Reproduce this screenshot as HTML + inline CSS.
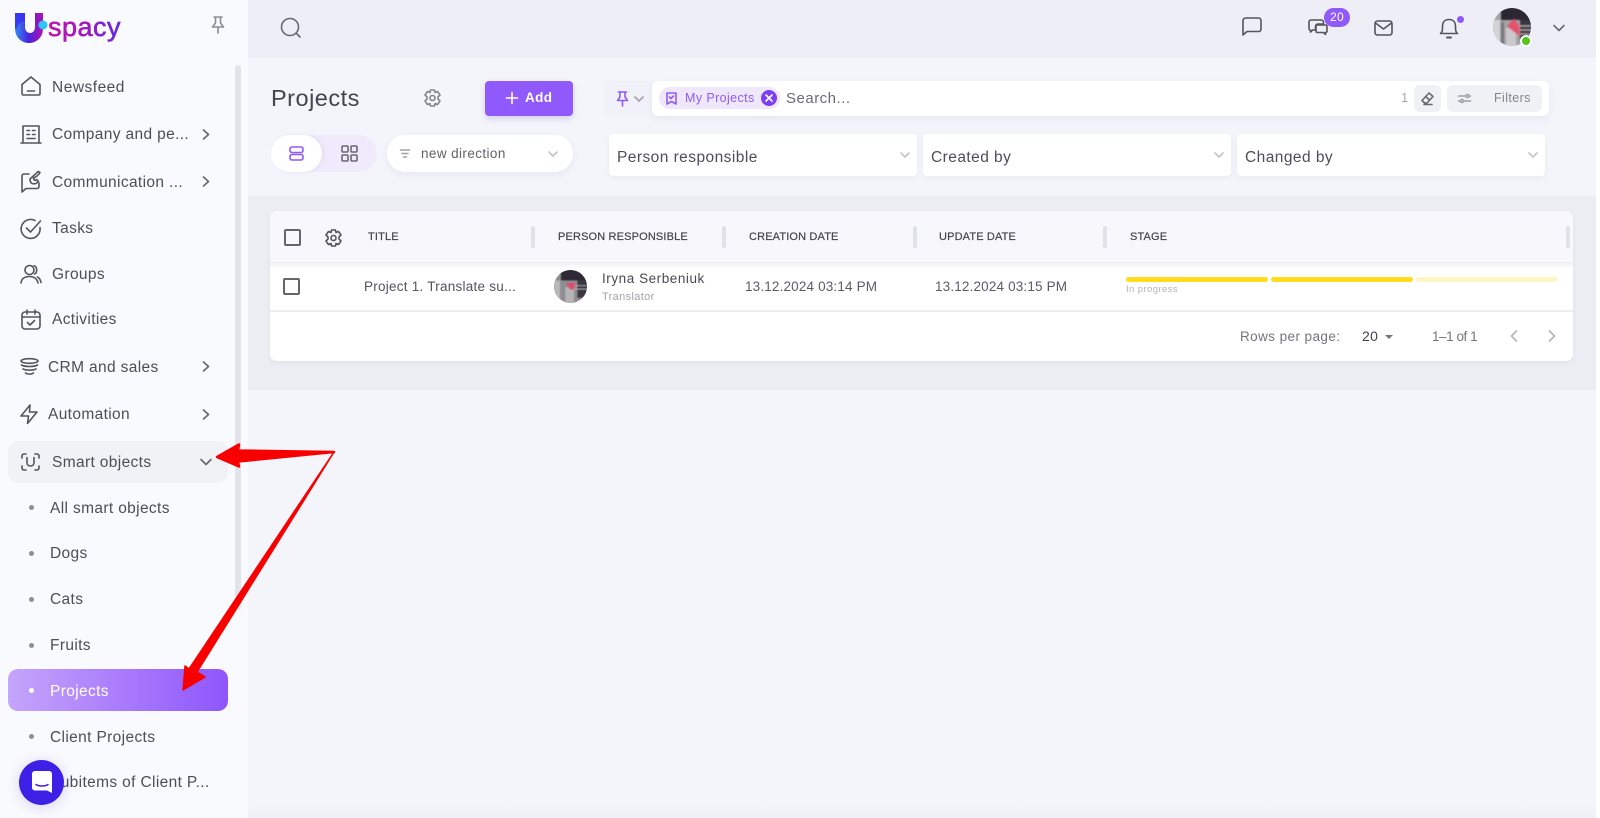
<!DOCTYPE html>
<html lang="en"><head><meta charset="utf-8"><title>Projects</title>
<style>
*{box-sizing:border-box}
html,body{margin:0;padding:0;width:1600px;height:818px;overflow:hidden;background:#f4f5fb;font-family:"Liberation Sans",sans-serif;color:#44424c}
.a{position:absolute}
.t{position:absolute;white-space:nowrap;line-height:20px;height:20px}
.n{font-size:15.5px;letter-spacing:.36px;color:#4f4d57;margin-top:1px}
.d{position:absolute;left:29px;width:5px;height:5px;border-radius:50%;background:#8f8e96}
svg{position:absolute;overflow:visible;fill:none;stroke:#55535c;stroke-width:1.6;stroke-linecap:round;stroke-linejoin:round}
.sep{position:absolute;top:226px;width:4px;height:22px;border-radius:2px;background:#e0e1e9}
.h{font-size:11px;letter-spacing:.15px;color:#45434d;top:227px;-webkit-text-stroke:.2px #45434d}
.dd{position:absolute;top:134px;height:42px;background:#fff;border-radius:4px;box-shadow:0 2px 6px rgba(90,90,130,.07)}
.dd span{position:absolute;left:8px;top:14px;font-size:15.5px;line-height:20px;letter-spacing:.45px;color:#4f4d57}
</style></head><body>

<!-- main backgrounds -->
<div class="a" style="left:248px;top:0;width:1348px;height:58px;background:#eeeff6"></div>
<div class="a" style="left:248px;top:58px;width:1348px;height:138px;background:#f4f5fb"></div>
<div class="a" style="left:248px;top:196px;width:1348px;height:194px;background:#ecedf3"></div>
<div class="a" style="left:1596px;top:0;width:4px;height:818px;background:#fff"></div>
<div class="a" style="left:248px;top:805px;width:1348px;height:13px;background:linear-gradient(#f4f5fb,#eff0f5)"></div>

<!-- sidebar -->
<div class="a" style="left:0;top:0;width:248px;height:818px;background:#f9fafd"></div>
<div class="a" style="left:235px;top:65px;width:6px;height:545px;border-radius:3px;background:#e1e2ea"></div>
<div class="a" style="left:8px;top:441px;width:220px;height:42px;border-radius:11px;background:#f1f2f6"></div>
<div class="a" style="left:8px;top:669px;width:220px;height:42px;border-radius:10px;background:linear-gradient(90deg,#c5a5fb,#8f55fc)"></div>

<!-- logo -->
<svg style="left:15px;top:12px" width="40" height="32" viewBox="0 0 40 32">
<defs><linearGradient id="lg" x1="0" y1="0" x2="1" y2="0"><stop offset="0" stop-color="#2f8cf5"/><stop offset=".5" stop-color="#4a22dc"/><stop offset="1" stop-color="#b312b0"/></linearGradient></defs>
<path d="M0 1H10V15C10 23 20 23 20 15V1H28V16C28 36 0 36 0 16Z" fill="url(#lg)" stroke="none"/>
<path d="M0 1H10V9C6 9 3 12 1 18L0 16Z" fill="#3a2cf0" stroke="none" opacity=".8"/>
<circle cx="28" cy="13" r="4.500" fill="#27c8f4" stroke="none"/>
</svg>
<div class="t" style="left:48px;top:12px;height:32px;line-height:30px;font-size:27px;letter-spacing:.5px;background:linear-gradient(90deg,#c316a8,#a516c0 50%,#4a32e8);-webkit-background-clip:text;background-clip:text;color:transparent;-webkit-text-stroke:.5px rgba(170,20,190,.55)">spacy</div>
<svg style="left:211px;top:16px" width="14" height="18" viewBox="0 0 14 18" stroke-width="1.300"><path d="M3 1H11M4.500 1V7L1.500 11H12.500L9.500 7V1M7 11V17" style="stroke:#8c8b93"/></svg>

<!-- sidebar icons -->
<svg style="left:21px;top:76px" width="20" height="20" viewBox="0 0 20 20"><path d="M1 8.500L10 1L19 8.500V17.500C19 18.400 18.400 19 17.500 19H2.500C1.600 19 1 18.400 1 17.500Z"/><path d="M6.500 15H13.500"/></svg>
<svg style="left:20px;top:125px" width="22" height="19" viewBox="0 0 22 19"><path d="M3 18V1H19V18M1 18H21"/><path d="M7 5.500H9.500M12.500 5.500H15M7 9.500H9.500M12.500 9.500H15M7 13.500H15"/></svg>
<svg style="left:21px;top:171px" width="20" height="22" viewBox="0 0 20 22"><path d="M8 3H3C1.900 3 1 3.900 1 5V21L5 17.500H16C17.100 17.500 18 16.600 18 15.500V12"/><path d="M9 8C9 12 11 13.500 15 12.500L17.500 10.500L15.500 8.500L14 9.500C13 9 12.500 8 12.500 7C15 6 17 5 19 1.500L17 .5C15 3 12 5 9 8Z"/></svg>
<svg style="left:20px;top:218px" width="22" height="21" viewBox="0 0 22 21"><path d="M20 9.500A9.500 9.500 0 1 1 15 2.500"/><path d="M6.500 10L10.500 14L20.500 3"/></svg>
<svg style="left:20px;top:264px" width="22" height="20" viewBox="0 0 22 20"><circle cx="9.500" cy="6" r="4.500"/><path d="M1 19C1.500 14.500 5 12.500 9.500 12.500C14 12.500 17 14.500 18 19"/><path d="M14 1.800C17.500 2 17.500 9 14.500 10M17.500 13C19.500 14 20.500 16 21 18.500"/></svg>
<svg style="left:21px;top:309px" width="20" height="21" viewBox="0 0 20 21"><rect x="1" y="3" width="18" height="17" rx="3"/><path d="M1 8H19M6 1V5M14 1V5M6.500 13.500L9 16L13.500 11.500"/></svg>
<svg style="left:20px;top:358px" width="19" height="18" viewBox="0 0 19 18"><ellipse cx="9.500" cy="3" rx="8.500" ry="2.300"/><path d="M1.500 7C5 9 14 9 17.500 7M3 11C6 12.500 13 12.500 16 11M5.500 15C7.500 16.500 11.500 16.500 13.500 15"/></svg>
<svg style="left:20px;top:404px" width="18" height="20" viewBox="0 0 18 20"><path d="M10 1L1 12H8.500L7.500 19.500L17 8H9.500Z"/></svg>
<svg style="left:21px;top:453px" width="19" height="18" viewBox="0 0 19 18"><path d="M1 5V3C1 1.900 1.900 1 3 1H5M14 1H16C17.100 1 18 1.900 18 3V5M18 13V15C18 16.100 17.100 17 16 17H14M5 17H3C1.900 17 1 16.100 1 15V13"/><path d="M6 4.500V10C6 14 13 14 13 10V4.500"/></svg>

<!-- chevrons -->
<svg style="left:202px;top:129px" width="8" height="11" viewBox="0 0 8 11"><path d="M1.500 1L6.500 5.500L1.500 10" style="stroke:#66656e"/></svg>
<svg style="left:202px;top:176px" width="8" height="11" viewBox="0 0 8 11"><path d="M1.500 1L6.500 5.500L1.500 10" style="stroke:#66656e"/></svg>
<svg style="left:202px;top:361px" width="8" height="11" viewBox="0 0 8 11"><path d="M1.500 1L6.500 5.500L1.500 10" style="stroke:#66656e"/></svg>
<svg style="left:202px;top:409px" width="8" height="11" viewBox="0 0 8 11"><path d="M1.500 1L6.500 5.500L1.500 10" style="stroke:#66656e"/></svg>
<svg style="left:200px;top:458px" width="12" height="8" viewBox="0 0 12 8"><path d="M1 1.500L6 6.500L11 1.500" style="stroke:#66656e"/></svg>

<!-- sidebar text -->
<div class="t n" style="left:52px;top:77px;letter-spacing:.5px">Newsfeed</div>
<div class="t n" style="left:52px;top:124px">Company and pe...</div>
<div class="t n" style="left:52px;top:172px">Communication ...</div>
<div class="t n" style="left:52px;top:218px">Tasks</div>
<div class="t n" style="left:52px;top:264px">Groups</div>
<div class="t n" style="left:52px;top:309px">Activities</div>
<div class="t n" style="left:48px;top:357px">CRM and sales</div>
<div class="t n" style="left:48px;top:404px">Automation</div>
<div class="t n" style="left:52px;top:452px">Smart objects</div>
<div class="d" style="top:505px"></div><div class="t n" style="left:50px;top:498px">All smart objects</div>
<div class="d" style="top:551px"></div><div class="t n" style="left:50px;top:543px">Dogs</div>
<div class="d" style="top:597px"></div><div class="t n" style="left:50px;top:589px">Cats</div>
<div class="d" style="top:643px"></div><div class="t n" style="left:50px;top:635px">Fruits</div>
<div class="d" style="top:688px;background:#fff"></div><div class="t n" style="left:50px;top:681px;color:#fff">Projects</div>
<div class="d" style="top:734px"></div><div class="t n" style="left:50px;top:727px">Client Projects</div>
<div class="d" style="top:780px"></div><div class="t n" style="left:50px;top:772px">Subitems of Client P...</div>

<!-- chat bubble -->
<div class="a" style="left:19px;top:760px;width:45px;height:45px;border-radius:50%;background:#3d20e6;box-shadow:0 2px 14px rgba(60,30,220,.18)"></div>
<svg style="left:32px;top:771px" width="20" height="23" viewBox="0 0 20 23"><path d="M3 0H17C18.700 0 20 1.300 20 3V22L15 19.500H3C1.300 19.500 0 18.200 0 16.500V3C0 1.300 1.300 0 3 0Z" style="fill:#fff;stroke:none"/><path d="M4 13.500C7 15.500 13 15.500 16 13.500" style="stroke:#3d20e6;stroke-width:1.500"/></svg>

<!-- topbar icons -->
<svg style="left:280px;top:17px" width="22" height="22" viewBox="0 0 22 22" stroke-width="1.500"><circle cx="10" cy="10" r="8.500" style="stroke:#6a6972"/><path d="M16.500 16.500L20 20" style="stroke:#6a6972"/></svg>
<svg style="left:1242px;top:17px" width="20" height="19" viewBox="0 0 20 19"><path d="M4 1H16.500C18 1 19 2 19 3.500V12C19 13.500 18 14.500 16.500 14.500H5L1 18V4C1 2 2 1 4 1Z"/></svg>
<svg style="left:1308px;top:19px" width="20" height="18" viewBox="0 0 20 18"><path d="M3 1H13C14.500 1 15.500 2 15.500 3.500V5H10C8.500 5 7.500 6 7.500 7.500V11H4.500L2.500 13V11.500C1.500 11 1 10 1 9V3C1 2 2 1 3 1Z"/><path d="M9.500 6H17.500C18.400 6 19 6.600 19 7.500V12C19 13 18.400 13.500 17.500 13.500V15.500L15.500 13.500H9.500C8.600 13.500 8 13 8 12V7.500C8 6.600 8.600 6 9.500 6Z"/></svg>
<div class="a" style="left:1324px;top:8px;width:26px;height:19px;border-radius:10px;background:#9059fb;color:#fff;font-size:12px;line-height:19px;text-align:center;letter-spacing:.3px">20</div>
<svg style="left:1374px;top:20px" width="19" height="16" viewBox="0 0 19 16"><rect x="1" y="1" width="17" height="14" rx="2.500"/><path d="M1.500 3L9.500 9L17.500 3"/></svg>
<svg style="left:1439px;top:18px" width="20" height="21" viewBox="0 0 20 21"><path d="M1.500 15.500C3.500 14 3.500 12 3.500 8.500C3.500 4 6 1.500 10 1.500C14 1.500 16.500 4 16.500 8.500C16.500 12 16.500 14 18.500 15.500Z"/><path d="M8 19.500H12" style="stroke-width:2"/></svg>
<div class="a" style="left:1457px;top:16px;width:7px;height:7px;border-radius:50%;background:#9059fb"></div>
<svg style="left:1493px;top:8px;stroke:none" width="38" height="38" viewBox="0 0 38 38"><defs><clipPath id="c1"><circle cx="19" cy="19" r="19"/></clipPath><filter id="b1"><feGaussianBlur stdDeviation=".7"/></filter></defs><g clip-path="url(#c1)" style="stroke:none"><rect width="38" height="38" fill="#a5a5a8"/><g filter="url(#b1)"><rect x="8" y="-2" width="32" height="14" fill="#2a2630"/><rect x="27" y="12" width="12" height="20" fill="#3a363e"/><rect x="0" y="12" width="7" height="28" fill="#d4d4d6"/><rect x="8" y="14" width="3" height="26" fill="#77777a"/><rect x="13" y="20" width="10" height="20" fill="#c9c9cb"/><path d="M22 18H38M23 22H38M24 26H36" stroke="#b9b9bc" style="stroke-width:1"/><path d="M14 18L21 11L26 17L27 28L21 24Z" fill="#e4526c"/></g></g></svg>
<div class="a" style="left:1520px;top:35px;width:12px;height:12px;border-radius:50%;background:#52c41a;border:2px solid #fff"></div>
<svg style="left:1553px;top:24px" width="12" height="8" viewBox="0 0 12 8"><path d="M1 1.500L6 6.500L11 1.500" style="stroke:#6a6972"/></svg>

<!-- page header -->
<div class="t" style="left:271px;top:86px;height:24px;line-height:24px;font-size:23.500px;letter-spacing:.5px;color:#45434d">Projects</div>
<svg style="left:424px;top:89px" width="17" height="18" viewBox="0 0 17 18" stroke-width="1.200"><path d="M6.500 1H10.500L11 3.500L13.500 2.500L16 6L14 8V10L16 12L13.500 15.500L11 14.500L10.500 17H6.500L6 14.500L3.500 15.500L1 12L3 10V8L1 6L3.500 2.500L6 3.500Z" style="stroke:#85848c"/><circle cx="8.500" cy="9" r="2.500" style="stroke:#85848c"/></svg>
<div class="a" style="left:485px;top:81px;width:88px;height:35px;border-radius:4px;background:#9059fb;box-shadow:0 3px 7px rgba(110,80,200,.22)"></div>
<svg style="left:506px;top:92px" width="12" height="12" viewBox="0 0 12 12"><path d="M6 .5V11.500M.5 6H11.500" style="stroke:#fff"/></svg>
<div class="t" style="left:525px;top:88px;font-size:13.500px;letter-spacing:.4px;color:#fff;font-weight:700">Add</div>

<div class="a" style="left:271px;top:135px;width:106px;height:37px;border-radius:19px;background:#f0ebfc"></div>
<div class="a" style="left:271px;top:135px;width:51px;height:37px;border-radius:19px;background:#fff;box-shadow:2px 0 5px rgba(90,70,150,.08)"></div>
<svg style="left:289px;top:146px" width="15" height="15" viewBox="0 0 15 15" stroke-width="1.400"><rect x="1" y="1" width="13" height="5.500" rx="2" style="stroke:#9059fb"/><rect x="1" y="8.500" width="13" height="5.500" rx="2" style="stroke:#9059fb"/></svg>
<svg style="left:341px;top:145px" width="17" height="17" viewBox="0 0 17 17" stroke-width="1.400"><rect x="1" y="1" width="6" height="6" rx="1" style="stroke:#6a6972"/><rect x="10" y="1" width="6" height="6" rx="1" style="stroke:#6a6972"/><rect x="1" y="10" width="6" height="6" rx="1" style="stroke:#6a6972"/><rect x="10" y="10" width="6" height="6" rx="1" style="stroke:#6a6972"/></svg>
<div class="a" style="left:387px;top:135px;width:186px;height:37px;border-radius:19px;background:#fff;box-shadow:0 3px 8px rgba(90,90,130,.08)"></div>
<svg style="left:400px;top:149px" width="10" height="9" viewBox="0 0 10 9" stroke-width="1"><path d="M.5 1H9.500M2 4.500H8M3.500 8H6.500" style="stroke:#a3a2aa"/></svg>
<div class="t" style="left:421px;top:144px;font-size:13.500px;letter-spacing:.4px;color:#62606a">new direction</div>
<svg style="left:548px;top:151px" width="10" height="6" viewBox="0 0 10 6" stroke-width="1.100"><path d="M1 1L5 5L9 1" style="stroke:#c4c3c9"/></svg>

<!-- search bar -->
<div class="a" style="left:604px;top:81px;width:60px;height:35px;border-radius:6px;background:#f1f2f9"></div>
<svg style="left:616px;top:91px" width="13" height="16" viewBox="0 0 13 16" stroke-width="1.300"><path d="M2.500 1H10.500M4 1V6L1.500 9.500H11.500L9 6V1M6.500 9.500V15" style="stroke:#9059fb"/></svg>
<svg style="left:634px;top:96px" width="10" height="6" viewBox="0 0 10 6" stroke-width="1.100"><path d="M1 1L5 5L9 1" style="stroke:#a3a2aa"/></svg>
<div class="a" style="left:652px;top:81px;width:897px;height:35px;border-radius:6px;background:#fff;box-shadow:0 3px 8px rgba(90,90,130,.09)"></div>
<div class="a" style="left:659px;top:87px;width:121px;height:22px;border-radius:11px;background:#efe8fd"></div>
<svg style="left:666px;top:92px" width="11" height="13" viewBox="0 0 11 13" stroke-width="1.200"><path d="M1 1H10V12L5.500 9.500L1 12Z M3.500 5L5 6.500L7.500 4" style="stroke:#9059fb"/></svg>
<div class="t" style="left:685px;top:88px;font-size:12.500px;letter-spacing:.4px;color:#9059fb">My Projects</div>
<div class="a" style="left:761px;top:90px;width:16px;height:16px;border-radius:50%;background:#7c3ff2"></div>
<svg style="left:765px;top:94px" width="8" height="8" viewBox="0 0 8 8" stroke-width="1.300"><path d="M1 1L7 7M7 1L1 7" style="stroke:#fff"/></svg>
<div class="t" style="left:786px;top:89px;font-size:15px;letter-spacing:.5px;color:#6c6b73">Search...</div>
<div class="t" style="left:1401px;top:88px;font-size:13px;color:#a9a8af">1</div>
<div class="a" style="left:1414px;top:85px;width:27px;height:27px;border-radius:6px;background:#f0f1f5"></div>
<svg style="left:1421px;top:92px" width="13" height="13" viewBox="0 0 13 13" stroke-width="1.100"><path d="M8 1L12 4.500L6 11H3.500L1 8.500Z M4.500 4.500L8.500 8M3 12.500H11" style="stroke:#6a6972"/></svg>
<div class="a" style="left:1447px;top:85px;width:95px;height:27px;border-radius:6px;background:#f0f1f5"></div>
<svg style="left:1458px;top:93px" width="13" height="11" viewBox="0 0 13 11" stroke-width="1"><path d="M.5 3H8M11 3H12.500M.5 8H2.500M5.500 8H12.500" style="stroke:#a09fa7"/><circle cx="9.500" cy="3" r="1.500" style="stroke:#a09fa7"/><circle cx="4" cy="8" r="1.500" style="stroke:#a09fa7"/></svg>
<div class="t" style="left:1494px;top:88px;font-size:12.500px;letter-spacing:.4px;color:#85848c">Filters</div>

<!-- dropdowns -->
<div class="dd" style="left:609px;width:308px"><span>Person responsible</span><svg style="left:291px;top:18px" width="10" height="6" viewBox="0 0 10 6" stroke-width="1.100"><path d="M1 1L5 5L9 1" style="stroke:#c4c3c9"/></svg></div>
<div class="dd" style="left:923px;width:308px"><span>Created by</span><svg style="left:291px;top:18px" width="10" height="6" viewBox="0 0 10 6" stroke-width="1.100"><path d="M1 1L5 5L9 1" style="stroke:#c4c3c9"/></svg></div>
<div class="dd" style="left:1237px;width:308px"><span>Changed by</span><svg style="left:291px;top:18px" width="10" height="6" viewBox="0 0 10 6" stroke-width="1.100"><path d="M1 1L5 5L9 1" style="stroke:#c4c3c9"/></svg></div>

<!-- table -->
<div class="a" style="left:270px;top:211px;width:1303px;height:150px;border-radius:7px;background:#fff;box-shadow:0 2px 6px rgba(90,90,130,.07);overflow:hidden">
  <div class="a" style="left:0;top:0;width:100%;height:52px;background:#f8f8fc;border-bottom:1px solid #eeeef3"></div>
  <div class="a" style="left:0;top:52px;width:100%;height:6px;background:linear-gradient(#f1f1f6,#fff)"></div>
  <div class="a" style="left:0;top:99px;width:100%;height:2px;background:#ecedf3"></div>
</div>
<div class="a" style="left:284px;top:229px;width:17px;height:17px;border:2px solid #66656e;border-radius:2px"></div>
<svg style="left:325px;top:229px" width="17" height="18" viewBox="0 0 17 18" stroke-width="1.300"><path d="M6.500 1H10.500L11 3.500L13.500 2.500L16 6L14 8V10L16 12L13.500 15.500L11 14.500L10.500 17H6.500L6 14.500L3.500 15.500L1 12L3 10V8L1 6L3.500 2.500L6 3.500Z"/><circle cx="8.500" cy="9" r="2.500"/></svg>
<div class="t h" style="left:368px">TITLE</div><div class="sep" style="left:531px"></div>
<div class="t h" style="left:558px">PERSON RESPONSIBLE</div><div class="sep" style="left:722px"></div>
<div class="t h" style="left:749px">CREATION DATE</div><div class="sep" style="left:913px"></div>
<div class="t h" style="left:939px">UPDATE DATE</div><div class="sep" style="left:1103px"></div>
<div class="t h" style="left:1130px">STAGE</div><div class="sep" style="left:1566px"></div>

<div class="a" style="left:283px;top:278px;width:17px;height:17px;border:2px solid #66656e;border-radius:2px"></div>
<div class="t" style="left:364px;top:277px;font-size:13.500px;letter-spacing:.25px;color:#55535c">Project 1. Translate su...</div>
<svg style="left:554px;top:270px;stroke:none" width="33" height="33" viewBox="0 0 38 38"><defs><clipPath id="c2"><circle cx="19" cy="19" r="19"/></clipPath></defs><g clip-path="url(#c2)" style="stroke:none"><rect width="38" height="38" fill="#8e8e91"/><g filter="url(#b1)"><rect x="8" y="-2" width="32" height="14" fill="#2f2b35"/><rect x="27" y="12" width="12" height="20" fill="#3a363e"/><rect x="0" y="12" width="7" height="28" fill="#b8b8ba"/><rect x="13" y="20" width="10" height="20" fill="#b5b5b7"/><path d="M22 18H38M23 22H38" stroke="#aaa" style="stroke-width:1"/><path d="M14 15L25 15L22 23L18 22Z" fill="#e4466c"/></g></g></svg>
<div class="t" style="left:602px;top:269px;font-size:13.500px;letter-spacing:.55px;color:#4a4852">Iryna Serbeniuk</div>
<div class="t" style="left:602px;top:287px;font-size:11px;letter-spacing:.35px;color:#a3a2aa">Translator</div>
<div class="t" style="left:745px;top:277px;font-size:13.500px;letter-spacing:.16px;color:#5c5a64">13.12.2024 03:14 PM</div>
<div class="t" style="left:935px;top:277px;font-size:13.500px;letter-spacing:.16px;color:#5c5a64">13.12.2024 03:15 PM</div>
<div class="a" style="left:1126px;top:277px;width:142px;height:5px;border-radius:3px;background:#ffdc1e"></div>
<div class="a" style="left:1271px;top:277px;width:142px;height:5px;border-radius:3px;background:#ffdc1e"></div>
<div class="a" style="left:1416px;top:277px;width:142px;height:5px;border-radius:3px;background:#fff6c8"></div>
<div class="t" style="left:1126px;top:280px;font-size:9.500px;letter-spacing:.4px;color:#b5b4bb">In progress</div>

<div class="t" style="left:1240px;top:327px;font-size:13.500px;letter-spacing:.42px;color:#75747c">Rows per page:</div>
<div class="t" style="left:1362px;top:326px;font-size:14px;letter-spacing:.3px;color:#45434d">20</div>
<div class="a" style="left:1385px;top:335px;width:0;height:0;border-left:4.500px solid transparent;border-right:4.500px solid transparent;border-top:4.500px solid #75747c"></div>
<div class="t" style="left:1432px;top:327px;font-size:13.500px;letter-spacing:-.45px;color:#75747c">1–1 of 1</div>
<svg style="left:1510px;top:330px" width="8" height="12" viewBox="0 0 8 12"><path d="M6.500 1L1.500 6L6.500 11" style="stroke:#b5b4bb"/></svg>
<svg style="left:1548px;top:330px" width="8" height="12" viewBox="0 0 8 12"><path d="M1.500 1L6.500 6L1.500 11" style="stroke:#b5b4bb"/></svg>

<!-- red arrows -->
<svg style="left:0;top:0;stroke:none" width="1600" height="818" viewBox="0 0 1600 818">
<path d="M334 452L238 450.500L239 444.500L217 457L239 466.500L238 461.500Z" fill="#f80000" style="stroke:#f80000;stroke-width:2.500"/>
<path d="M334 452L197 672L205 677L183 690L185 666L189 669Z" fill="#f80000" style="stroke:#f80000;stroke-width:1.500"/>
</svg>
</body></html>
